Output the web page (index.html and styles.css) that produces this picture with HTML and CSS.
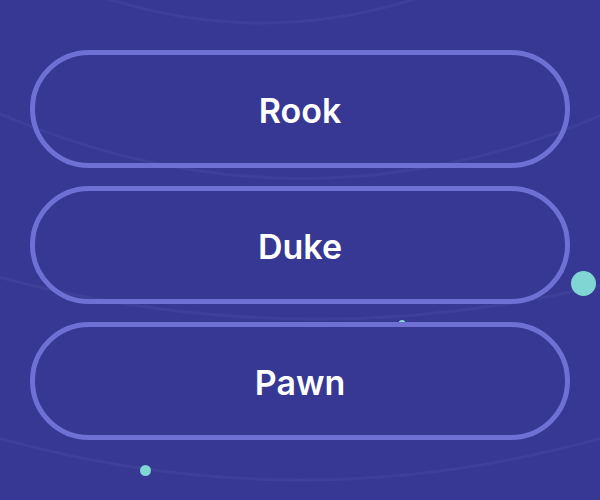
FILE: index.html
```html
<!DOCTYPE html>
<html lang="en">
<head>
<meta charset="utf-8">
<title>Choose a piece</title>
<link rel="stylesheet" href="styles.css">
</head>
<body>
<div class="screen">
  <svg class="decor" width="600" height="500" viewBox="0 0 600 500" aria-hidden="true">
    <g fill="none" stroke="#ffffff" stroke-opacity="0.04" stroke-width="3">
      <path d="M 105 -2 Q 262 48 418 -2"/>
      <path d="M -2 113 Q 300 243 602 115"/>
      <path d="M -2 277 Q 300 357 602 285"/>
      <path d="M -2 438 Q 300 522 602 438"/>
    </g>
    <g fill="#7fd6d2">
      <circle cx="402" cy="323.5" r="3.5"/>
    </g>
  </svg>
  <div class="choices">
    <button class="choice" type="button">Rook</button>
    <button class="choice" type="button">Duke</button>
    <button class="choice" type="button">Pawn</button>
  </div>
  <span class="dot dot-big"></span>
  <span class="dot dot-small"></span>
</div>
</body>
</html>
```
FILE: styles.css
```css
html, body {
  margin: 0;
  padding: 0;
  background: #363894;
}

.screen {
  position: relative;
  width: 600px;
  height: 500px;
  overflow: hidden;
  background: #363894;
  font-family: Inter, Lato, sans-serif;
}

.decor {
  position: absolute;
  left: 0;
  top: 0;
}

.choices {
  position: relative;
  display: flex;
  flex-direction: column;
  gap: 18px;
  padding: 50px 30px 0;
}

.choice {
  box-sizing: border-box;
  height: 118px;
  width: 100%;
  border: 5px solid #6e70d4;
  border-radius: 59px;
  background: transparent;
  color: #ffffff;
  font-family: Inter, Lato, sans-serif;
  font-weight: 600;
  font-size: 34px;
  padding: 3px 0 0;
  cursor: pointer;
}

.dot {
  position: absolute;
  border-radius: 50%;
  background: #7fd6d2;
}

.dot-big {
  left: 571px;
  top: 271px;
  width: 25px;
  height: 25px;
}

.dot-small {
  left: 140px;
  top: 464.5px;
  width: 11px;
  height: 11px;
}
```
